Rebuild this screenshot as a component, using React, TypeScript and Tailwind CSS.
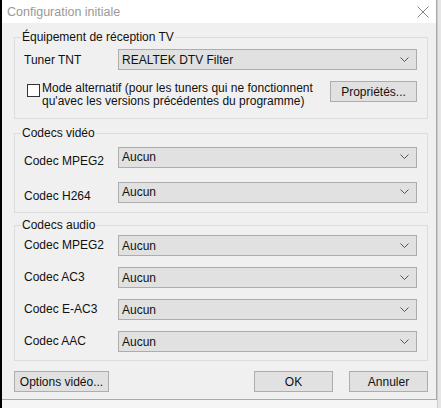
import React from "react";

const font = { fontFamily: '"Liberation Sans", Arial, sans-serif' };

function Chevron() {
  return (
    <svg width="9" height="6" viewBox="0 0 9 6" className="shrink-0">
      <polyline points="0.5,0.5 4.5,4.5 8.5,0.5" fill="none" stroke="#555" strokeWidth="1" />
    </svg>
  );
}

function Combo({ value }: { value: string }) {
  return (
    <div className="flex items-center justify-between w-[299px] h-[21px] shrink-0 bg-[#e1e1e1] border border-[#adadad] pl-[3px] pr-[7px] text-[#111]">
      <span>{value}</span>
      <Chevron />
    </div>
  );
}

function Btn({ label, className }: { label: string; className?: string }) {
  return (
    <div
      className={
        "flex items-center justify-center h-[21px] bg-[#e1e1e1] border border-[#adadad] text-[#111] " + (className ?? "")
      }
    >
      {label}
    </div>
  );
}

function Row({ label, value, labelClass }: { label: string; value: string; labelClass?: string }) {
  return (
    <div className="flex items-center justify-between">
      <span className={"pl-[9px] " + (labelClass ?? "")}>{label}</span>
      <Combo value={value} />
    </div>
  );
}

export default function App() {
  return (
    <div className="flex w-[441px] h-[408px] overflow-hidden bg-[#f3f3f3] text-[12px] leading-[16px] text-[#111]" style={font}>
      <div className="w-[2px] h-full bg-black shrink-0" />
      <div className="flex flex-col w-[435px] shrink-0">
        <div className="flex flex-col w-full h-[400px] border-r border-b border-[#aaaaaa] bg-[#f0f0f0]">
          {/* title bar */}
          <div className="flex items-center justify-between h-[23px] bg-white pl-[5px] pr-[7px]">
            <span className="text-[#999999] text-[12.5px] pt-[1px]">Configuration initiale</span>
            <svg width="12" height="12" viewBox="0 0 12 12">
              <path d="M0.5 0.5 L11.5 11.5 M11.5 0.5 L0.5 11.5" stroke="#888" strokeWidth="1" />
            </svg>
          </div>

          <div className="flex flex-col pl-[12px] pr-[8px]">
            <fieldset className="mt-[6px] border border-[#dcdcdc] pr-[10px] h-[90px]">
              <legend className="ml-[6px] px-[1px]">Équipement de réception TV</legend>
              <div className="mt-[4px]">
                <Row label="Tuner TNT" value="REALTEK DTV Filter" />
              </div>
              <div className="flex items-start justify-between mt-[11px]">
                <div className="flex items-start pl-[12px]">
                  <div className="w-[13px] h-[13px] mt-[3px] border border-[#333] bg-white shrink-0" />
                  <div className="pl-[2px] pt-[1px] leading-[13px]">
                    Mode alternatif (pour les tuners qui ne fonctionnent
                    <br />
                    qu'avec les versions précédentes du programme)
                  </div>
                </div>
                <Btn label="Propriétés..." className="w-[87px]" />
              </div>
            </fieldset>

            <fieldset className="mt-[6px] border border-[#dcdcdc] pr-[10px] pb-[8px]">
              <legend className="ml-[6px] px-[1px]">Codecs vidéo</legend>
              <div className="flex flex-col gap-[11px] mt-[4px]">
                <Row label="Codec MPEG2" value="Aucun" labelClass="mt-[8px]" />
                <Row label="Codec H264" value="Aucun" labelClass="mt-[8px]" />
              </div>
            </fieldset>

            <fieldset className="mt-[4px] border border-[#dcdcdc] pr-[10px] pb-[8px]">
              <legend className="ml-[6px] px-[1px]">Codecs audio</legend>
              <div className="flex flex-col gap-[11px] mt-[2px]">
                <Row label="Codec MPEG2" value="Aucun" labelClass="-mt-[2px]" />
                <Row label="Codec AC3" value="Aucun" labelClass="-mt-[2px]" />
                <Row label="Codec E-AC3" value="Aucun" labelClass="-mt-[2px]" />
                <Row label="Codec AAC" value="Aucun" labelClass="-mt-[2px]" />
              </div>
            </fieldset>

            <div className="flex items-center mt-[10px]">
              <Btn label="Options vidéo..." className="w-[95px]" />
              <div className="flex-1" />
              <Btn label="OK" className="w-[79px]" />
              <Btn label="Annuler" className="w-[79px] ml-[16px]" />
            </div>
          </div>
        </div>
        <div className="flex-1 bg-[#f5f5f5]" />
      </div>
      <div className="flex-1 bg-[#e6e6e6] border-l border-[#cccccc]" />
    </div>
  );
}
